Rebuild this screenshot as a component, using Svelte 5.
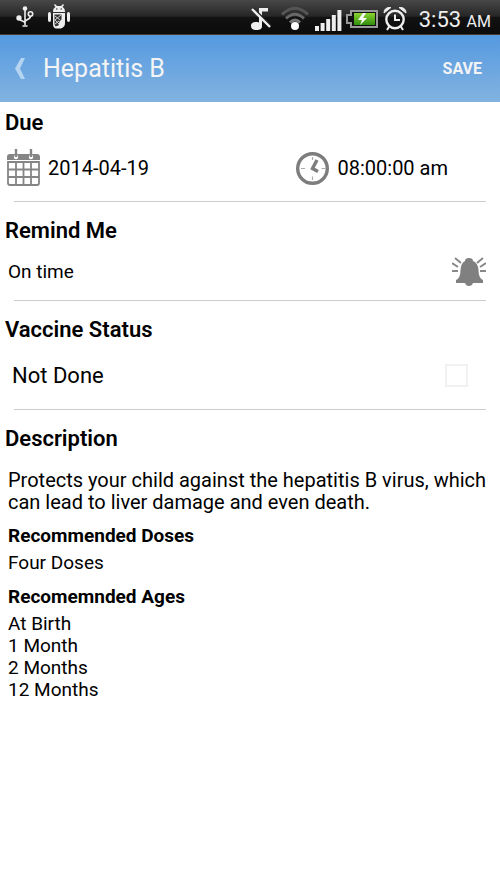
<script>
  let dueDate = $state('2014-04-19');
  let dueTime = $state('08:00:00 am');
  let reminder = $state('On time');
  let done = $state(false);

  const bars = [5, 8, 12, 16, 21];
  const ages = ['At Birth', '1 Month', '2 Months', '12 Months'];
</script>

<div class="status-bar">
  <div class="notifications">
    <svg width="18" height="22" viewBox="0 0 18 22" fill="none" stroke="#eee" stroke-width="1.6">
      <path d="M9 3v16M3 12c0 3 6 3 6 5M14.500 10c0 4-5.500 3-5.500 6M6.500 20h5" />
      <circle cx="9" cy="2.500" r="2.300" fill="#eee" stroke="none" />
      <circle cx="3" cy="12" r="2.700" fill="#eee" stroke="none" />
      <circle cx="14.500" cy="8" r="2.200" />
    </svg>
    <svg width="22" height="26" viewBox="0 0 22 26">
      <path d="M5 8C5 5 6 4 7.500 3L6 1l1-1 2 2h4l2-2 1 1-1.500 2C16 4 17 5 17 8z" fill="#eee" />
      <path d="M5 9h12v10c0 3-1 4-4 5.500H9c-3 0-4-2-4-5zM0 10q0-2 1.500-2T3 10v6q0 2-1.500 2T0 16zM19 10q0-2 1.500-2T22 10v6q0 2-1.500 2T19 16z" fill="#eee" />
      <path d="M6.500 10.500h7v5l-2 2-1 4-3 1-1-2z" fill="#333" />
      <path d="M7 12l5 4M7 16l4 4M13 11l-6 5M11 17l-4 3" stroke="#ccc" />
      <path d="M8 5h1.500M12.500 5H14" stroke="#222" />
    </svg>
  </div>
  <div class="system">
    <svg class="mute" width="20" height="24" viewBox="0 0 20 24">
      <path d="M8 1h9v3.500h-6V19c0 3-2 4-5.500 4S0 22 0 19s2-4 5-4c1 0 2 0 3 .5z" fill="#eee" />
      <path d="M2 1l18 18" stroke="#222" stroke-width="2" />
      <path d="M1 2l18 18" stroke="#eee" stroke-width="2.400" />
    </svg>
    <svg class="wifi" width="30" height="25" viewBox="0 0 30 25" fill="none" stroke-width="3">
      <path d="M2 9.500Q15-3 28 9.500" stroke="#555" />
      <path d="M6 13.500Q15 5 24 13.500" stroke="#686868" />
      <path d="M10 17.500Q15 12.500 20 17.500" stroke="#777" />
      <circle cx="15" cy="21" r="4" fill="#fff" />
    </svg>
    <svg class="signal" width="27" height="22" viewBox="0 0 27 22" fill="#eee">
      {#each bars as bar, i}
        <rect x={i * 5.6} y={22 - bar} width="4" height={bar} />
      {/each}
    </svg>
    <svg class="battery" width="32" height="18" viewBox="0 0 32 18">
      <defs>
        <linearGradient id="charge" x2="0" y2="1">
          <stop offset="0" stop-color="#8ad431" />
          <stop offset="1" stop-color="#2f8d0c" />
        </linearGradient>
      </defs>
      <path d="M5 1h26v16H5v-4H1V5h4z" fill="#111" stroke="#999" stroke-width="2" />
      <rect x="8" y="3" width="21" height="12" fill="url(#charge)" />
      <path d="M17 3l-5 7h4l-2 5 7-7h-4l3-5z" fill="#fff" />
    </svg>
    <svg class="alarm" width="24" height="25" viewBox="0 0 24 25" fill="none" stroke="#eee" stroke-width="2.4">
      <circle cx="12" cy="13.500" r="8.700" />
      <path d="M12 8.500V14h5M6.500 20L4 24M17.500 20l2.500 4" stroke-width="2" />
      <path d="M1 7Q1 1 8 1.500zM23 7q0-6-7-5.500z" fill="#eee" stroke-width="1" />
    </svg>
    <span class="clock">3:53 <small>AM</small></span>
  </div>
</div>

<header>
  <button class="back" aria-label="Back">
    <svg width="10" height="21" viewBox="0 0 10 21">
      <path d="M6 0h4L5 10.500 10 21H6L0 10.500z" fill="#b5d4f1" />
    </svg>
  </button>
  <h1>Hepatitis B</h1>
  <button class="save">SAVE</button>
</header>

<main>
  <section>
    <h2>Due</h2>
    <div class="row due">
      <button class="date">
        <svg width="33" height="38" viewBox="0 0 33 38">
          <path d="M3 5h27q3 0 3 3v3H0V8q0-3 3-3z" fill="#858585" />
          <circle cx="9" cy="8" r="2.200" fill="#fff" />
          <circle cx="24" cy="8" r="2.200" fill="#fff" />
          <path d="M9 0v8M24 0v8" stroke="#858585" stroke-width="2.400" />
          <path d="M1 13h31v21q0 2-2 2H3q-2 0-2-2zM1 20.500h31M1 28h31M9 13v23M16.500 13v23M24 13v23" fill="none" stroke="#858585" stroke-width="1.800" />
        </svg>
        {dueDate}
      </button>
      <button class="time">
        <svg width="33" height="33" viewBox="0 0 33 33" fill="none" stroke="#7d7d7d">
          <circle cx="16.500" cy="16.500" r="14.800" stroke-width="3.400" />
          <path d="M16.500 5v3M16.500 24.500V28M5 16.500h4M25.500 16.500h4" stroke="#aaa" stroke-width="1.200" />
          <path d="M21 8L16.500 16.500l5.500 3" stroke-width="3.400" />
        </svg>
        {dueTime}
      </button>
    </div>
  </section>

  <section>
    <h2>Remind Me</h2>
    <button class="row remind">
      {reminder}
      <svg width="34" height="30" viewBox="0 0 34 30">
        <path d="M13 4q0-3 4-3t4 3q5 2 5.500 9 0 8 4.500 10v3H21q-1 3-4 3t-4-3H4v-3q4.500-2 4.500-10Q9 6 13 4z" fill="#808080" />
        <path d="M3 1l6 5M0 6l6 4M0 14h6M31 1l-6 5M34 6l-6 4M34 14h-6" stroke="#888" stroke-width="2" />
      </svg>
    </button>
  </section>

  <section>
    <h2>Vaccine Status</h2>
    <label class="row status">
      Not Done
      <input type="checkbox" bind:checked={done} />
    </label>
  </section>

  <section>
    <h2>Description</h2>
    <div class="description">
      <p class="summary">Protects your child against the hepatitis B virus, which can lead to liver damage and even death.</p>
      <h3>Recommended Doses</h3>
      <p>Four Doses</p>
      <h3>Recomemnded Ages</h3>
      <ul>
        {#each ages as age}
          <li>{age}</li>
        {/each}
      </ul>
    </div>
  </section>
</main>

<style>
  :global(body) {
    margin: 0;
    background: #fff;
    color: #000;
    font-family: Roboto, sans-serif;
  }

  svg {
    display: block;
    flex-shrink: 0;
  }

  button {
    padding: 0;
    border: 0;
    background: none;
    color: inherit;
    font: inherit;
    cursor: pointer;
  }

  h1, h2, h3, p, ul {
    margin: 0;
    padding: 0;
  }

  .status-bar {
    display: flex;
    justify-content: space-between;
    box-sizing: border-box;
    height: 35px;
    padding: 0 9px 0 16px;
    border-bottom: 1px solid #4a3a27;
    background: linear-gradient(#484848, #262626 48%, #121212 50%, #0b0b0b);
    color: #eee;
  }

  .notifications, .system {
    display: flex;
    align-items: center;
  }

  .notifications {
    gap: 14px;
  }

  .mute {
    margin: 3px 9px 0 0;
  }

  .wifi, .battery {
    margin-right: 5px;
  }

  .signal {
    margin: 6px 4px 0 0;
  }

  .battery {
    margin-top: 4px;
  }

  .alarm {
    margin: 2px 12px 0 0;
  }

  .clock {
    padding-top: 4px;
    font-size: 22px;
  }

  .clock small {
    font-size: 16px;
  }

  header {
    display: flex;
    align-items: center;
    height: 67px;
    padding: 0 18px 0 15px;
    background: linear-gradient(#5599e0, #82b3e0);
    color: #f4f4f4;
  }

  .back {
    margin-right: 18px;
  }

  h1 {
    flex: 1;
    font-size: 25px;
    font-weight: 400;
    line-height: 30px;
  }

  .save {
    font-size: 16px;
    font-weight: 700;
  }

  section {
    padding-top: 9px;
  }

  section:not(:last-child)::after {
    content: '';
    display: block;
    height: 1px;
    margin: 0 14px 8px;
    background: #ccc;
  }

  h2 {
    padding-left: 5px;
    font-size: 22px;
    font-weight: 600;
    line-height: 24px;
  }

  .row {
    display: flex;
    align-items: center;
    justify-content: space-between;
    box-sizing: border-box;
    width: 100%;
    font-size: 19px;
  }

  .due {
    height: 66px;
    padding: 0 52px 0 7px;
    font-size: 20px;
  }

  .date, .time {
    display: flex;
    align-items: center;
    gap: 8px;
  }

  .remind {
    height: 57px;
    padding: 0 14px 0 8px;
  }

  .status {
    height: 67px;
    padding: 0 32px 0 12px;
    font-size: 22px;
  }

  input {
    appearance: none;
    width: 23px;
    height: 23px;
    margin: 0;
    border: 2px solid #f1f1f1;
    background: #fff;
  }

  input:checked {
    background: #82b3e0;
  }

  .description {
    padding: 18px 8px;
    font-size: 19px;
    line-height: 22px;
  }

  .summary {
    font-size: 20px;
  }

  h3 {
    margin: 12px 0 5px;
    font-size: 19px;
    font-weight: 700;
  }

  ul {
    list-style: none;
  }
</style>
